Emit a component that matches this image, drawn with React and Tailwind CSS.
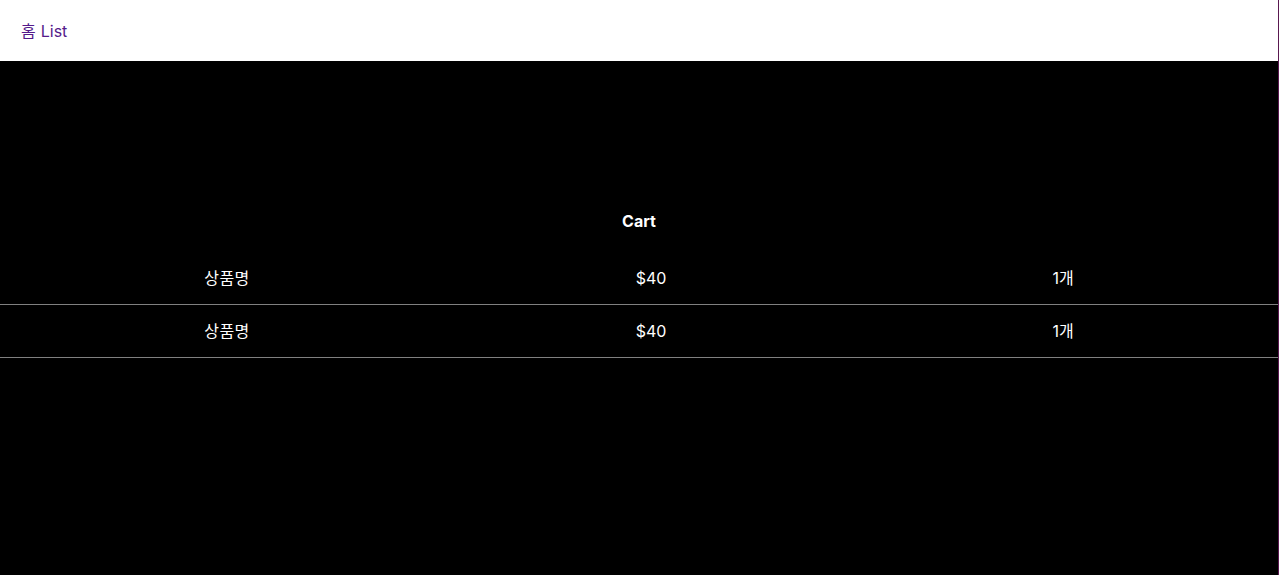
import React from "react";

const items = [
  { name: "상품명", price: "$40", qty: "1개" },
  { name: "상품명", price: "$40", qty: "1개" },
];

const App = () => {
  return (
    <div
      className="min-h-[575px] bg-[#5a1850] pr-px"
      style={{ fontFamily: 'Inter, "Noto Sans CJK KR", sans-serif' }}
    >
      <div className="min-h-[575px] bg-black">
        <header className="h-[61px] bg-white flex items-center px-[21px]">
          <nav className="text-base text-[#551a8b] flex gap-[5px]">
            <a href="#">홈</a>
            <a href="#">List</a>
          </nav>
        </header>
        <main className="pt-[148px] text-white">
          <h2 className="text-base font-bold text-center leading-6">Cart</h2>
          <div className="mt-[19px]">
            {items.map((item, i) => (
              <div
                key={i}
                className="grid grid-cols-[454px_394px_1fr] h-[53px] items-center border-b border-[#808080] text-base text-center"
              >
                <div className="tracking-[0.5px]">{item.name}</div>
                <div>{item.price}</div>
                <div>{item.qty}</div>
              </div>
            ))}
          </div>
        </main>
      </div>
    </div>
  );
};

export default App;
